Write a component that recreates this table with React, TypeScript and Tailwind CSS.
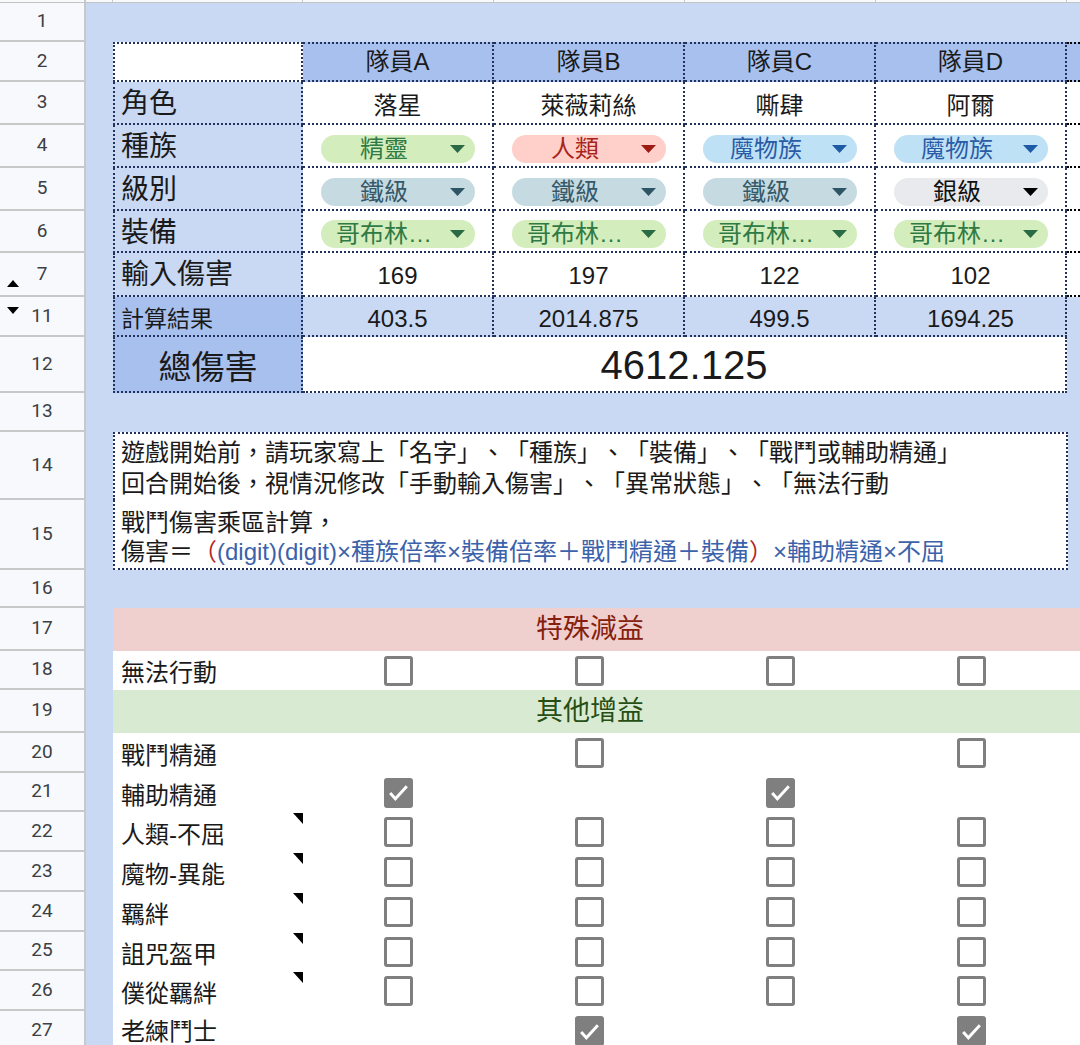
import type { ReactNode } from "react";

const font = "font-['Liberation_Sans','Noto_Sans_CJK_TC',sans-serif]";
const dot = "border-dotted border-[#22325a]";

type Tone = "green" | "red" | "blue" | "iron" | "silver";

const tones: Record<Tone, { cls: string; arrow: string }> = {
  green: { cls: "bg-[#d4edbc] text-[#2f7a45]", arrow: "#2a6b45" },
  red: { cls: "bg-[#ffcfc9] text-[#a8231a]", arrow: "#9e1b12" },
  blue: { cls: "bg-[#bfe1f6] text-[#2a5ca6]", arrow: "#1f5aa6" },
  iron: { cls: "bg-[#c6dbe1] text-[#35596a]", arrow: "#2e5566" },
  silver: { cls: "bg-[#e8eaed] text-[#111]", arrow: "#000" },
};

const members = ["隊員A", "隊員B", "隊員C", "隊員D"];
const names = ["落星", "萊薇莉絲", "嘶肆", "阿爾"];
const races: [string, Tone][] = [
  ["精靈", "green"],
  ["人類", "red"],
  ["魔物族", "blue"],
  ["魔物族", "blue"],
];
const levels: [string, Tone][] = [
  ["鐵級", "iron"],
  ["鐵級", "iron"],
  ["鐵級", "iron"],
  ["銀級", "silver"],
];
const gear: [string, Tone][] = [
  ["哥布林…", "green"],
  ["哥布林…", "green"],
  ["哥布林…", "green"],
  ["哥布林…", "green"],
];
const damage = ["169", "197", "122", "102"];
const results = ["403.5", "2014.875", "499.5", "1694.25"];

// null = no checkbox in that cell
const buffs: { n: number; label: string; note?: boolean; boxes: (boolean | null)[] }[] = [
  { n: 20, label: "戰鬥精通", boxes: [null, false, null, false] },
  { n: 21, label: "輔助精通", boxes: [true, null, true, null] },
  { n: 22, label: "人類-不屈", note: true, boxes: [false, false, false, false] },
  { n: 23, label: "魔物-異能", note: true, boxes: [false, false, false, false] },
  { n: 24, label: "羈絆", note: true, boxes: [false, false, false, false] },
  { n: 25, label: "詛咒盔甲", note: true, boxes: [false, false, false, false] },
  { n: 26, label: "僕從羈絆", note: true, boxes: [false, false, false, false] },
  { n: 27, label: "老練鬥士", boxes: [null, true, null, true] },
];

function Row({
  n,
  h,
  mark,
  children,
}: {
  n: number;
  h: string;
  mark?: "up" | "down";
  children?: ReactNode;
}) {
  return (
    <div className={`flex ${h}`}>
      <div className="relative flex w-[86px] shrink-0 items-center justify-center border-r-2 border-b-2 border-[#c8c8c8] bg-[#f8f9fc] font-['Roboto',sans-serif] text-[19px] text-[#3c4043]">
        {mark === "up" && (
          <svg className="absolute left-[7px] top-[27px]" width="12" height="7" viewBox="0 0 12 7">
            <path d="M0 7L6 0L12 7Z" fill="#000" />
          </svg>
        )}
        {mark === "down" && (
          <svg className="absolute left-[7px] top-[10px]" width="12" height="7" viewBox="0 0 12 7">
            <path d="M0 0H12L6 7Z" fill="#000" />
          </svg>
        )}
        {n}
      </div>
      <div className="flex min-w-0 flex-1 bg-[#c9d9f4]">
        <div className="w-[27px] shrink-0" />
        {children}
      </div>
    </div>
  );
}

function Chip({ label, tone }: { label: string; tone: Tone }) {
  const t = tones[tone];
  return (
    <div className={`flex h-[28px] w-[154px] items-center rounded-full pl-[8px] pr-[10px] ${t.cls}`}>
      <span className="mr-[10px] flex-1 text-center text-[24px] leading-[28px]">{label}</span>
      <svg width="15" height="8" viewBox="0 0 15 8">
        <path d="M0 0H15L7.5 8Z" fill={t.arrow} />
      </svg>
    </div>
  );
}

function Box({ checked }: { checked: boolean }) {
  if (checked) {
    return (
      <div className="flex h-[30px] w-[29px] items-center justify-center rounded-[3px] bg-[#7f7f7f]">
        <svg width="25" height="25" viewBox="0 0 24 24" fill="none" stroke="#fff" strokeWidth="2.8">
          <path d="M4 12.5l5 5.5L20 6" />
        </svg>
      </div>
    );
  }
  return <div className="h-[30px] w-[29px] rounded-[3px] border-[3px] border-[#7f7f7f] bg-white" />;
}

function Label({ children, pt = "pt-[3px]" }: { children: ReactNode; pt?: string }) {
  return (
    <div className={`flex w-[190px] shrink-0 items-center border-x-2 border-b-2 pl-[6px] text-[28px] ${pt} ${dot}`}>
      {children}
    </div>
  );
}

function Cell({ children, pt = "pt-[6px]" }: { children?: ReactNode; pt?: string }) {
  return (
    <div className={`flex w-[191px] shrink-0 items-center justify-center border-r-2 border-b-2 bg-white text-[24px] ${pt} ${dot}`}>
      {children}
    </div>
  );
}

function EdgeF() {
  return <div className="flex-1 border-b-2 border-dotted border-black bg-white" />;
}

export default function App() {
  return (
    <div className={`h-[1045px] w-[1080px] overflow-hidden bg-white text-[#1a1a1a] [text-spacing-trim:space-all] ${font}`}>
      {/* column header strip, mostly scrolled away */}
      <div className="flex h-[3px] border-b border-[#c4c4c4] bg-[#f8f9fa]">
        <div className="w-[86px] border-r-2 border-[#c8c8c8]" />
        <div className="w-[27px] border-r border-[#c8c8c8]" />
        <div className="w-[190px] border-r border-[#c8c8c8]" />
        <div className="w-[191px] border-r border-[#c8c8c8]" />
        <div className="w-[191px] border-r border-[#c8c8c8]" />
        <div className="w-[191px] border-r border-[#c8c8c8]" />
        <div className="w-[191px] border-r border-[#c8c8c8]" />
      </div>

      <Row n={1} h="h-[39px]" />

      <Row n={2} h="h-[40px]">
        <div className={`w-[190px] shrink-0 border-2 bg-white ${dot}`} />
        {members.map((m) => (
          <div
            key={m}
            className={`flex w-[191px] shrink-0 items-center justify-center border-y-2 border-r-2 bg-[#a8c0ee] text-[24px] ${dot}`}
          >
            {m}
          </div>
        ))}
        <div className="flex-1 border-y-2 border-dotted border-black bg-[#a8c0ee]" />
      </Row>

      <Row n={3} h="h-[43px]">
        <Label>角色</Label>
        {names.map((v) => (
          <Cell key={v} pt="pt-[7px]">
            {v}
          </Cell>
        ))}
        <EdgeF />
      </Row>

      <Row n={4} h="h-[43px]">
        <Label>種族</Label>
        {races.map(([v, t], i) => (
          <Cell key={i}>
            <Chip label={v} tone={t} />
          </Cell>
        ))}
        <EdgeF />
      </Row>

      <Row n={5} h="h-[43px]">
        <Label>級別</Label>
        {levels.map(([v, t], i) => (
          <Cell key={i}>
            <Chip label={v} tone={t} />
          </Cell>
        ))}
        <EdgeF />
      </Row>

      <Row n={6} h="h-[42px]">
        <Label>裝備</Label>
        {gear.map(([v, t], i) => (
          <Cell key={i}>
            <Chip label={v} tone={t} />
          </Cell>
        ))}
        <EdgeF />
      </Row>

      <Row n={7} h="h-[44px]" mark="up">
        <Label pt="pt-[1px]">輸入傷害</Label>
        {damage.map((v) => (
          <Cell key={v} pt="pt-[4px]">
            {v}
          </Cell>
        ))}
        <EdgeF />
      </Row>

      <Row n={11} h="h-[40px]" mark="down">
        <div className={`flex w-[190px] shrink-0 items-center border-x-2 border-b-2 bg-[#a8c0ee] pl-[6px] pt-[6px] text-[23px] ${dot}`}>
          計算結果
        </div>
        {results.map((v) => (
          <div
            key={v}
            className={`flex w-[191px] shrink-0 items-center justify-center border-r-2 border-b-2 pt-[6px] text-[24px] ${dot}`}
          >
            {v}
          </div>
        ))}
        <div className="flex-1" />
      </Row>

      <Row n={12} h="h-[56px]">
        <div className={`flex w-[190px] shrink-0 items-center justify-center border-x-2 border-b-2 bg-[#a8c0ee] pt-[8px] text-[33px] ${dot}`}>
          總傷害
        </div>
        <div className={`flex w-[764px] shrink-0 items-center justify-center border-r-2 border-b-2 bg-white pt-[2px] text-[40px] ${dot}`}>
          4612.125
        </div>
        <div className="flex-1" />
      </Row>

      <Row n={13} h="h-[39px]" />

      <Row n={14} h="h-[68px]">
        <div className={`w-[955px] shrink-0 border-x-2 border-t-2 bg-white pl-[6px] pt-[3px] text-[24px] leading-[31px] ${dot}`}>
          <div>遊戲開始前，請玩家寫上「名字」、「種族」、「裝備」、「戰鬥或輔助精通」</div>
          <div>回合開始後，視情況修改「手動輸入傷害」、「異常狀態」、「無法行動</div>
        </div>
      </Row>

      <Row n={15} h="h-[70px]">
        <div className={`w-[955px] shrink-0 border-x-2 border-b-2 bg-white pl-[6px] pt-[8px] text-[24px] leading-[29px] ${dot}`}>
          <div>戰鬥傷害乘區計算，</div>
          <div>
            傷害＝<span className="text-[#b3261e]">（</span>
            <span className="text-[#3b62aa]">(digit)(digit)×種族倍率×裝備倍率＋戰鬥精通＋裝備</span>
            <span className="text-[#b3261e]">）</span>
            <span className="text-[#3b62aa]">×輔助精通×不屈</span>
          </div>
        </div>
      </Row>

      <Row n={16} h="h-[38px]" />

      <Row n={17} h="h-[43px]">
        <div className="flex flex-1 bg-[#f0cfcf]">
          <div className="flex w-[954px] shrink-0 items-center justify-center text-[27px] text-[#85200c]">
            特殊減益
          </div>
        </div>
      </Row>

      <Row n={18} h="h-[39px]">
        <div className="flex flex-1 bg-white">
          <div className="flex w-[190px] shrink-0 items-center pl-[8px] pt-[4px] text-[24px]">無法行動</div>
          {[0, 1, 2, 3].map((i) => (
            <div key={i} className="flex w-[191px] shrink-0 items-center justify-center">
              <Box checked={false} />
            </div>
          ))}
        </div>
      </Row>

      <Row n={19} h="h-[43px]">
        <div className="flex flex-1 bg-[#d9ead3]">
          <div className="flex w-[954px] shrink-0 items-center justify-center text-[27px] text-[#274e13]">
            其他增益
          </div>
        </div>
      </Row>

      {buffs.map((b) => (
        <Row key={b.n} n={b.n} h={b.n === 21 || b.n === 25 ? "h-[39px]" : "h-[40px]"}>
          <div className="flex flex-1 bg-white">
            <div
              className={`relative flex w-[190px] shrink-0 items-center pl-[8px] text-[24px] ${b.n === 27 ? "pt-[2px]" : "pt-[6px]"}`}
            >
              {b.label}
              {b.note && (
                <svg className="absolute right-0 top-[1px]" width="10" height="11" viewBox="0 0 10 11">
                  <path d="M0 0H10V11Z" fill="#000" />
                </svg>
              )}
            </div>
            {b.boxes.map((c, i) => (
              <div key={i} className="flex w-[191px] shrink-0 items-center justify-center">
                {c !== null && <Box checked={c} />}
              </div>
            ))}
          </div>
        </Row>
      ))}
    </div>
  );
}
